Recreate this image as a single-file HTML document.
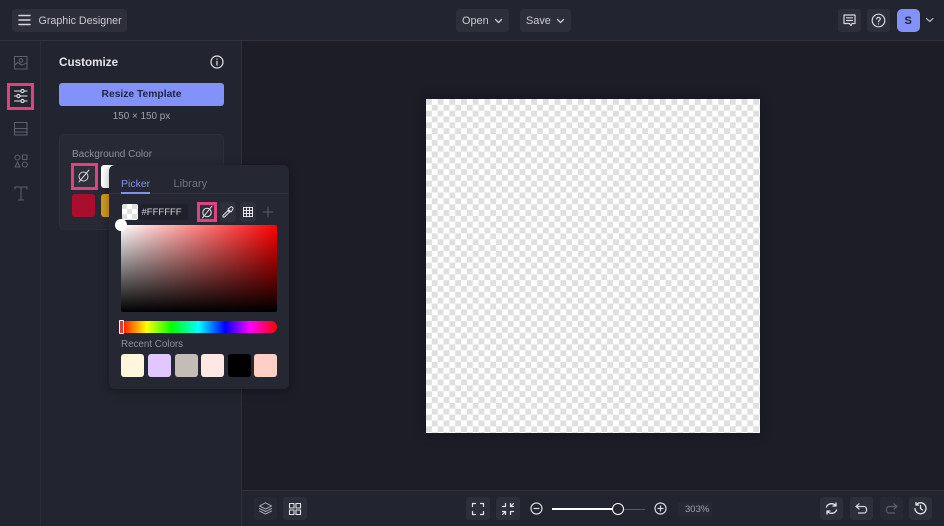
<!DOCTYPE html>
<html><head><meta charset="utf-8"><style>
*{box-sizing:border-box}
html,body{margin:0;padding:0}
body{width:944px;height:526px;position:relative;overflow:hidden;background:#1c1d27;font-family:"Liberation Sans",sans-serif;color:#d5d6dc}
.a{position:absolute}
.btn{position:absolute;background:#2d2f3b;border-radius:3px}
.t{position:absolute;white-space:nowrap;line-height:1}
svg{position:absolute;overflow:visible;fill:none;stroke-linecap:round;stroke-linejoin:round}
.check{background:repeating-conic-gradient(#dfdfdf 0 25%,#fff 0 50%)}
.pink{position:absolute;border:3px solid #e0427f;background:#2d2f3b}
.sw{position:absolute;width:23px;height:23px;border-radius:3px;top:354px}
</style></head><body>
<div class="a" style="left:0;top:0;width:944px;height:41px;background:#22242f;border-bottom:1px solid #30323d"></div>
<div class="a" style="left:0;top:41px;width:41px;height:485px;background:#22242f;border-right:1px solid #2b2d38"></div>
<div class="a" style="left:41px;top:41px;width:201px;height:485px;background:#22242f;border-right:1px solid #2e303b"></div>
<div class="a" style="left:242px;top:490px;width:702px;height:36px;background:#22242f;border-top:1px solid #30323d"></div>

<div class="btn" style="left:12px;top:9px;width:115px;height:23px"></div>
<svg style="left:18px;top:14px" width="13" height="12" stroke="#d5d6dc" stroke-width="1.4"><path d="M1 1.500H12M1 6H12M1 10.500H12"/></svg>
<div class="t" style="left:38.500px;top:16px;font-size:10.700px;color:#c9cad1">Graphic Designer</div>

<div class="btn" style="left:456px;top:9px;width:53px;height:23px"></div>
<div class="t" style="left:462px;top:16px;font-size:10.900px;color:#c9cad1">Open</div>
<svg style="left:494px;top:18px" width="9" height="6" stroke="#c9cad1" stroke-width="1.3"><path d="M1.500 1.500L4.500 4.500L7.500 1.500"/></svg>
<div class="btn" style="left:520px;top:9px;width:51px;height:23px"></div>
<div class="t" style="left:526px;top:16px;font-size:10.900px;color:#c9cad1">Save</div>
<svg style="left:556px;top:18px" width="9" height="6" stroke="#c9cad1" stroke-width="1.3"><path d="M1.500 1.500L4.500 4.500L7.500 1.500"/></svg>

<div class="btn" style="left:838px;top:9px;width:23px;height:23px"></div>
<svg style="left:843px;top:14px" width="13" height="13" stroke="#d5d6dc" stroke-width="1.2"><path d="M1 1H12V9.500H9L8 11.500L6.500 9.500H1ZM3.500 3.800H9.500M3.500 6.500H9.500"/></svg>
<div class="btn" style="left:867px;top:9px;width:23px;height:23px"></div>
<svg style="left:871px;top:13px" width="15" height="15" stroke="#d5d6dc" stroke-width="1.2"><circle cx="7.500" cy="7.500" r="6.300"/><path d="M5.700 6C5.700 3.800 9.300 3.800 9.300 6C9.300 7.300 7.500 7.300 7.500 8.800M7.500 10.800V11"/></svg>
<div class="a" style="left:897px;top:9px;width:23px;height:23px;border-radius:5px;background:#8392fb"></div>
<div class="t" style="left:904.500px;top:15.500px;font-size:11px;font-weight:bold;color:#20222e">S</div>
<svg style="left:925px;top:17px" width="10" height="6" stroke="#b5b6bf" stroke-width="1.2"><path d="M1.500 1.500L4.800 4.500L8 1.500"/></svg>

<!-- sidebar -->
<svg style="left:14px;top:56px" width="14" height="14" stroke="#5c5f6c" stroke-width="1.1"><path d="M.5 .5H13V13H.5ZM.5 9L4 6.500L7.500 9L13 7"/><circle cx="7" cy="4.500" r="1.800"/></svg>
<div class="pink" style="left:7px;top:83px;width:27px;height:27px;background:#23252f"></div>
<svg style="left:14px;top:89px" width="14" height="14" stroke="#e4e5ea" stroke-width="1.1"><path d="M.5 2H13M.5 7H13M.5 12H13"/><circle cx="8.500" cy="2" r="1.600" fill="#23252f"/><circle cx="4.500" cy="7" r="1.600" fill="#23252f"/><circle cx="8.500" cy="12" r="1.600" fill="#23252f"/></svg>
<svg style="left:14px;top:122px" width="14" height="14" stroke="#5c5f6c" stroke-width="1.1"><path d="M.5 .5H13V13H.5ZM.5 6.500H13M.5 10H13"/></svg>
<svg style="left:14px;top:154px" width="14" height="14" stroke="#5c5f6c" stroke-width="1.1"><circle cx="3.500" cy="3.500" r="2.500"/><path d="M8.500 1H13V5.500H8.500ZM3.500 8L6 13H1Z"/><circle cx="10.800" cy="10.500" r="2.500"/></svg>
<svg style="left:14px;top:186px" width="14" height="15" stroke="#5c5f6c" stroke-width="1.1"><path d="M1 3V1H13V3M7 1V14M4.500 14H9.500"/></svg>

<!-- panel -->
<div class="t" style="left:59px;top:57px;font-size:11.700px;font-weight:bold;color:#e4e5ea">Customize</div>
<svg style="left:210px;top:55px" width="14" height="14" stroke="#e4e5ea" stroke-width="1.2"><circle cx="7" cy="7" r="6"/><path d="M7 6.300V10M7 4V4.200"/></svg>
<div class="a" style="left:59px;top:83px;width:165px;height:23px;border-radius:3px;background:#8392fb"></div>
<div class="t" style="left:59px;top:90px;width:165px;text-align:center;font-size:10.300px;font-weight:bold;color:#20263f">Resize Template</div>
<div class="t" style="left:59px;top:112px;width:165px;text-align:center;font-size:9.900px;color:#a1a3ad">150 × 150 px</div>
<div class="a" style="left:59px;top:134px;width:165px;height:96px;border-radius:5px;background:#272934;border:1px solid #2d2f3a"></div>
<div class="t" style="left:72px;top:150px;font-size:10px;color:#8f919c">Background Color</div>
<div class="pink" style="left:71px;top:163px;width:27px;height:27px"></div>
<svg style="left:77px;top:169px" width="14" height="14" stroke="#d5d6dc" stroke-width="1"><circle cx="6.500" cy="7.500" r="4.500"/><path d="M2 13L12 1"/></svg>
<div class="a" style="left:101px;top:165px;width:23px;height:23px;border-radius:3px;background:#fff"></div>
<div class="a" style="left:72px;top:194px;width:23px;height:23px;border-radius:3px;background:#a90f2d"></div>
<div class="a" style="left:101px;top:194px;width:23px;height:23px;border-radius:3px;background:#d29a1c"></div>

<!-- canvas -->
<div class="a check" style="left:426px;top:99px;width:334px;height:334px;background-size:11.700px 11.700px;background-position:5.850px 0;box-shadow:0 0 12px rgba(0,0,0,.3)"></div>

<!-- popover -->
<div class="a" style="left:109px;top:165px;width:180px;height:224px;border-radius:6px;background:#252732;box-shadow:0 2px 10px rgba(0,0,0,.35)"></div>
<div class="a" style="left:109px;top:193px;width:180px;height:1px;background:#30323d"></div>
<div class="t" style="left:121px;top:179px;font-size:10.500px;color:#8392e8">Picker</div>
<div class="a" style="left:121px;top:192px;width:29px;height:1.500px;background:#8392e8"></div>
<div class="t" style="left:173.500px;top:179px;font-size:11px;color:#6f717d">Library</div>
<div class="a check" style="left:122px;top:204px;width:16px;height:16px;border-radius:2px;background-size:10px 10px;background-position:5px 0"></div>
<div class="a" style="left:138px;top:204px;width:50px;height:16px;background:#1f2029;border-radius:0 2px 2px 0"></div>
<div class="t" style="left:141.500px;top:208px;font-size:9.500px;color:#d5d6dc">#FFFFFF</div>
<div class="pink" style="left:197px;top:202px;width:20px;height:20px"></div>
<svg style="left:201px;top:205px" width="13" height="14" stroke="#e4e5ea" stroke-width="1"><circle cx="6" cy="7.500" r="4.200"/><path d="M1.500 13L11 1"/></svg>
<div class="btn" style="left:220px;top:202px;width:16px;height:20px;background:#2d2f3b"></div>
<svg style="left:222px;top:206px" width="12" height="12" stroke="#e4e5ea" stroke-width="1"><path d="M1 11L1 9.500L6 4.500L7.500 6L2.500 11ZM6 3L9 .8C10 .4 11.500 2 11 3L9 6Z"/></svg>
<div class="btn" style="left:240px;top:202px;width:16px;height:20px"></div>
<svg style="left:243px;top:207px" width="10" height="10" stroke="#e4e5ea" stroke-width="1"><path d="M.5 .5H9.500V9.500H.5ZM3.500 .5V9.500M6.500 .5V9.500M.5 3.500H9.500M.5 6.500H9.500"/></svg>
<svg style="left:263px;top:207px" width="10" height="10" stroke="#5c5f6c" stroke-width="1"><path d="M5 0V10M0 5H10"/></svg>
<div class="a" style="left:121px;top:225px;width:156px;height:87px;border-radius:2px;background:linear-gradient(to bottom,transparent,#000),linear-gradient(to right,#fff,#ff0000)"></div>
<div class="a" style="left:115px;top:219px;width:12px;height:12px;border-radius:50%;background:#fff"></div>
<div class="a" style="left:120px;top:321px;width:157px;height:12px;border-radius:0 6px 6px 0;background:linear-gradient(to right,#f00 0%,#ff0 17%,#0f0 33%,#0ff 50%,#00f 67%,#f0f 83%,#f00 100%)"></div>
<div class="a" style="left:119px;top:320px;width:5px;height:14px;background:#e23a3a;border:1px solid #fff;border-radius:1px"></div>
<div class="t" style="left:121px;top:340px;font-size:9.800px;color:#8f919c">Recent Colors</div>
<div class="sw" style="left:121px;background:#fff6dc"></div>
<div class="sw" style="left:148px;background:#e2c6ff"></div>
<div class="sw" style="left:174.500px;background:#c4bdb6"></div>
<div class="sw" style="left:201px;background:#ffe7e2"></div>
<div class="sw" style="left:228px;background:#000"></div>
<div class="sw" style="left:254px;background:#ffcfc5"></div>

<!-- bottom bar -->
<div class="btn" style="left:254px;top:497px;width:23px;height:23px;background:#272934"></div>
<svg style="left:259px;top:502px" width="13" height="13" stroke="#a1a3ad" stroke-width="1"><path d="M6.500 .8L12.500 4L6.500 7L.5 4ZM.5 6.500L6.500 9.500L12.500 6.500M.5 9L6.500 12L12.500 9"/></svg>
<div class="btn" style="left:283px;top:497px;width:24px;height:23px"></div>
<svg style="left:289px;top:503px" width="12" height="12" stroke="#e4e5ea" stroke-width="1.100"><path d="M.5 .5H5V5H.5ZM7 .5H11.500V5H7ZM.5 7H5V11.500H.5ZM7 7H11.500V11.500H7Z"/></svg>
<div class="btn" style="left:466px;top:497px;width:24px;height:23px"></div>
<svg style="left:472px;top:503px" width="12" height="12" stroke="#e4e5ea" stroke-width="1.200"><path d="M.5 3.500V.5H3.500M8.500 .5H11.500V3.500M11.500 8.500V11.500H8.500M3.500 11.500H.5V8.500"/></svg>
<div class="btn" style="left:496px;top:497px;width:24px;height:23px"></div>
<svg style="left:502px;top:503px" width="12" height="12" stroke="#e4e5ea" stroke-width="1.200"><path d="M.5 3.500H3.500V.5M8.500 .5V3.500H11.500M11.500 8.500H8.500V11.500M3.500 11.500V8.500H.5M8.500 3.500L11.500 .5M3.500 8.500L.5 11.500"/></svg>
<svg style="left:530px;top:502px" width="13" height="13" stroke="#d5d6dc" stroke-width="1.200"><circle cx="6.500" cy="6.500" r="5.500"/><path d="M4 6.500H9"/></svg>
<div class="a" style="left:552px;top:508px;width:66px;height:2px;background:#fff"></div>
<div class="a" style="left:618px;top:508.500px;width:27px;height:1px;background:#55576a"></div>
<div class="a" style="left:612px;top:503px;width:12px;height:12px;border-radius:50%;background:#23252f;border:1.500px solid #fff"></div>
<svg style="left:654px;top:502px" width="13" height="13" stroke="#d5d6dc" stroke-width="1.200"><circle cx="6.500" cy="6.500" r="5.500"/><path d="M4 6.500H9M6.500 4V9"/></svg>
<div class="a" style="left:678px;top:502px;width:34px;height:14px;background:#272934;border-radius:2px"></div>
<div class="t" style="left:685px;top:505px;font-size:9.500px;color:#a1a3ad">303%</div>

<div class="btn" style="left:820px;top:497px;width:23px;height:23px"></div>
<svg style="left:825px;top:502px" width="13" height="13" stroke="#e4e5ea" stroke-width="1.300"><path d="M1.500 5C2.500 1.500 8 .5 10.500 3.500M11.500 8C10.500 11.500 5 12.500 2.500 9.500M8 4H11V1M5 9H2V12"/></svg>
<div class="btn" style="left:850px;top:497px;width:23px;height:23px"></div>
<svg style="left:855px;top:503px" width="13" height="11" stroke="#d5d6dc" stroke-width="1.200"><path d="M4 .8L1 3.500L4 6M1 3.500H9C12.500 3.500 12.500 10 9 10H3.500"/></svg>
<div class="btn" style="left:880px;top:497px;width:23px;height:23px;background:#272934"></div>
<svg style="left:885px;top:503px" width="13" height="11" stroke="#5c5f6c" stroke-width="1.200"><path d="M9 .8L12 3.500L9 6M12 3.500H4C.5 3.500 .5 10 4 10H9.500"/></svg>
<div class="btn" style="left:909px;top:497px;width:23px;height:23px"></div>
<svg style="left:914px;top:502px" width="13" height="13" stroke="#e4e5ea" stroke-width="1.300"><path d="M2.500 2.500A5.500 5.500 0 1 1 1 6.500M2 .5V3H4.500M6.500 3.500V6.500L8.500 8"/></svg>
</body></html>
